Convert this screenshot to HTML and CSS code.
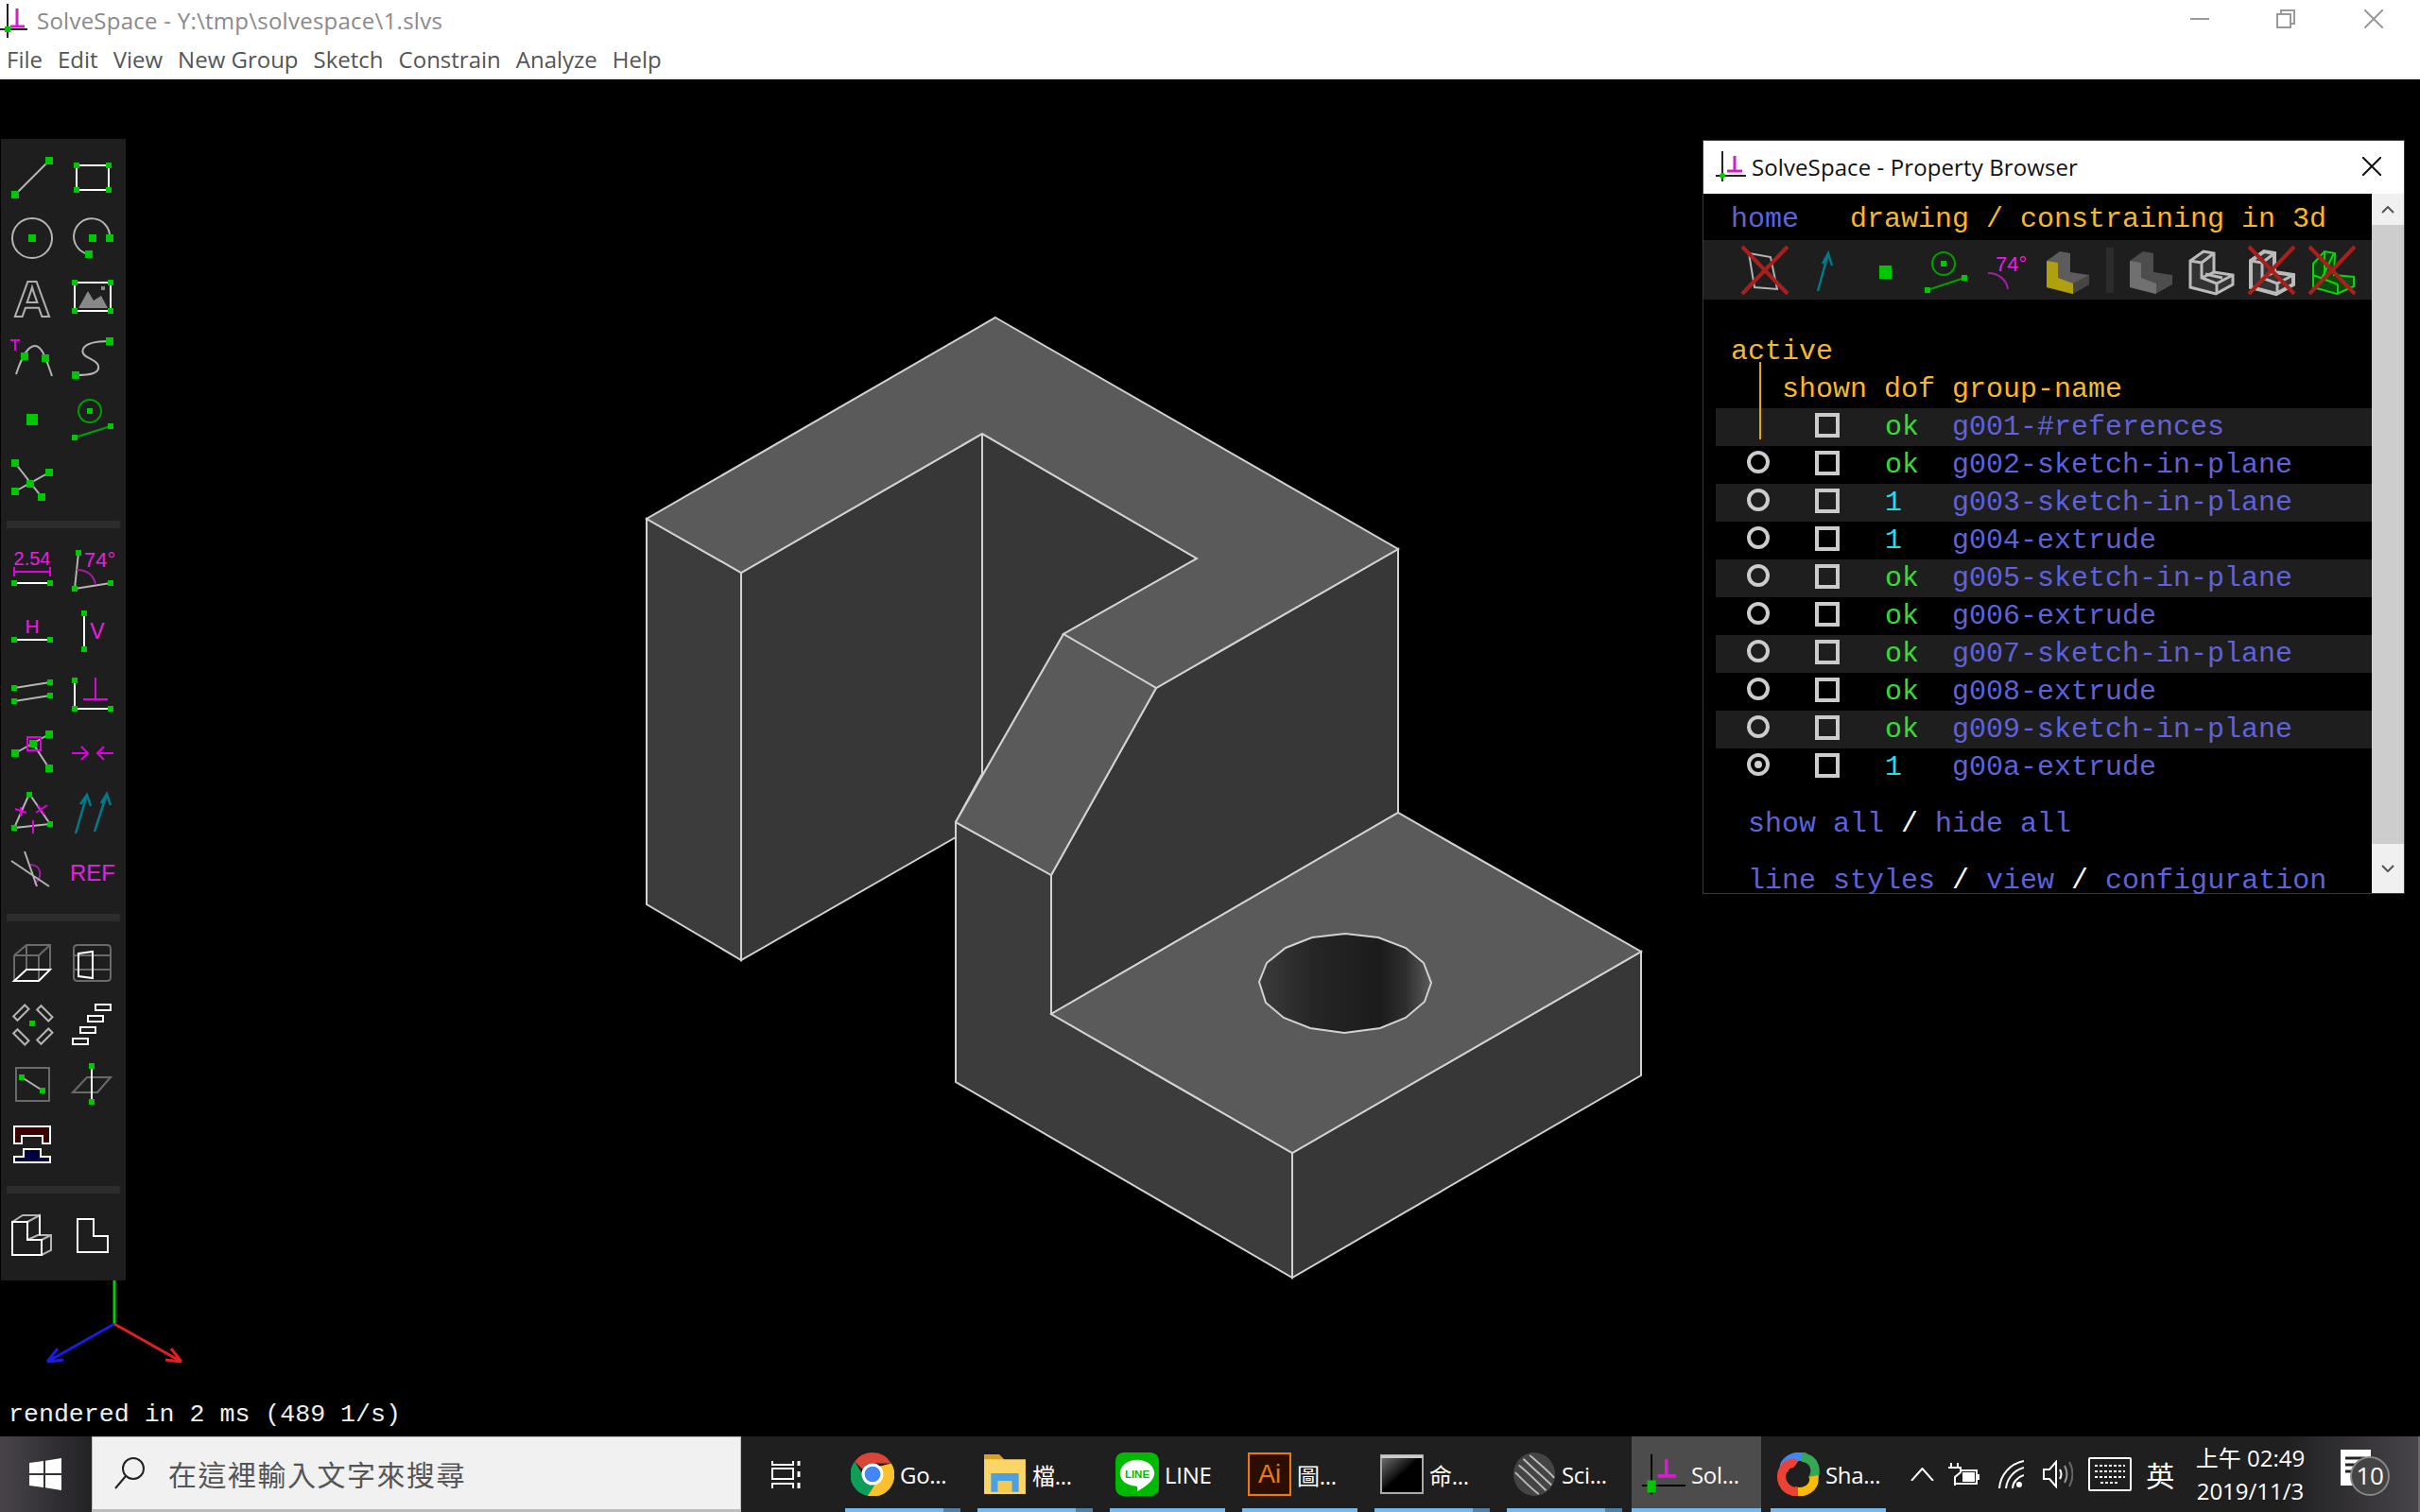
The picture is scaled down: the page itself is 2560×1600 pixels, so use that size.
FILE: index.html
```html
<!DOCTYPE html>
<html lang="zh-Hant">
<head>
  <meta charset="UTF-8" />
  <title>SolveSpace - Y:\tmp\solvespace\1.slvs</title>
  <link rel="stylesheet" href="styles.css">
</head>
<body>
  <div class="screen">
    <div class="titlebar">
      <svg class="logo" width="30" height="38" viewBox="0 0 30 38">
        <path d="M8 1V37M0 28H29" stroke="#222" stroke-width="2" fill="none"/>
        <path d="M11 25H26M18 6V25" stroke="#d020c8" stroke-width="3" fill="none"/>
        <rect x="5" y="25" width="6" height="6" fill="#00c800"/>
      </svg>
      <span class="title">SolveSpace - Y:\tmp\solvespace\1.slvs</span>
      <div class="winctl">
        <svg width="20" height="20" viewBox="0 0 20 20"><path d="M0 10H20"/></svg>
        <svg width="20" height="20" viewBox="0 0 20 20"><path d="M1 5H15V19H1ZM5 5V1H19V15H15"/></svg>
        <svg width="20" height="20" viewBox="0 0 20 20"><path d="M0 0L20 20M20 0L0 20"/></svg>
      </div>
    </div>
    <div class="menubar">
      <span>File</span><span>Edit</span><span>View</span><span>New Group</span><span>Sketch</span><span>Constrain</span><span>Analyze</span><span>Help</span>
    </div>

    <div class="canvas">
      <!-- model, coordinates are the screen ones -->
      <svg class="model" viewBox="0 84 2560 1436">
        <defs>
          <linearGradient id="holeshade" x1="0" x2="1" y1="0" y2="0">
            <stop offset="0" stop-color="#3c3c3c"/>
            <stop offset=".3" stop-color="#262626"/>
            <stop offset=".7" stop-color="#1b1b1b"/>
            <stop offset=".85" stop-color="#2e2e2e"/>
            <stop offset="1" stop-color="#5c5c5c"/>
          </linearGradient>
        </defs>
        <polygon class="f-left" points="684,549 784,606 784,1016 684,957"/>
        <polygon class="f-front" points="784,606 1039,459 1039,819 1011,870 1011,886 784,1016"/>
        <polygon class="f-front" points="1039,459 1266,591 1125,671 1011,870 1039,819"/>
        <polygon class="f-front" points="1223,728 1479,581 1479,860 1112,1073 1112,926"/>
        <polygon class="f-left" points="1011,870 1112,926 1112,1073 1367,1220 1367,1352 1011,1145"/>
        <polygon class="f-front" points="1367,1220 1736,1007 1736,1138 1367,1352"/>
        <polygon class="f-top" points="1053,336 1479,581 1223,728 1125,671 1266,591 1039,459 784,606 684,549"/>
        <polygon class="f-top" points="1125,671 1223,728 1112,926 1011,870"/>
        <polygon class="f-top" points="1112,1073 1479,860 1736,1007 1367,1220"/>
        <polygon class="hole" points="1423,988 1458,992 1487,1003 1506,1019 1514,1040 1507,1060 1487,1077 1460,1088 1422,1093 1386,1088 1358,1077 1339,1061 1332,1039 1340,1019 1360,1003 1388,992"/>
      </svg>

      <svg class="axes" width="160" height="110" viewBox="40 1340 160 110">
        <path d="M121 1401V1355" stroke="#00d000"/>
        <path d="M121 1401L50 1441M50 1441L61 1427M50 1441L67 1439" stroke="#1c1ce0"/>
        <path d="M121 1401L192 1441M192 1441L181 1427M192 1441L175 1439" stroke="#e02020"/>
      </svg>

      <div class="toolbar">
        <div class="tool-row">
          <svg class="ic" viewBox="0 0 48 48"><path class="gr" d="M6 43L42 7"/><rect class="pt" x="2" y="39" width="8" height="8"/><rect class="pt" x="38" y="3" width="8" height="8"/></svg>
          <svg class="ic" viewBox="0 0 48 48"><rect x="7" y="12" width="34" height="26"/><rect class="pt" x="4" y="9" width="6" height="6"/><rect class="pt" x="38" y="9" width="6" height="6"/><rect class="pt" x="4" y="35" width="6" height="6"/><rect class="pt" x="38" y="35" width="6" height="6"/></svg>
        </div>
        <div class="tool-row">
          <svg class="ic" viewBox="0 0 48 48"><circle class="gr" cx="24" cy="25" r="21"/><rect class="pt" x="20" y="21" width="8" height="8"/></svg>
          <svg class="ic" viewBox="0 0 48 48"><path class="gr" d="M20 42A19 19 0 1 1 42 25"/><rect class="pt" x="20" y="21" width="8" height="8"/><rect class="pt" x="38" y="21" width="8" height="8"/><rect class="pt" x="16" y="38" width="8" height="8"/></svg>
        </div>
        <div class="tool-row">
          <svg class="ic" viewBox="0 0 48 48"><text class="glyph-a" x="24" y="44" text-anchor="middle">A</text></svg>
          <svg class="ic" viewBox="0 0 48 48"><rect x="5" y="8" width="38" height="30"/><path d="M9 35L19 17L25 27L33 22L40 35Z" fill="#888" stroke="none"/><rect x="33" y="12" width="4" height="4" fill="#888" stroke="none"/><rect class="pt" x="2" y="5" width="6" height="6"/><rect class="pt" x="40" y="5" width="6" height="6"/><rect class="pt" x="2" y="35" width="6" height="6"/><rect class="pt" x="40" y="35" width="6" height="6"/></svg>
        </div>
        <div class="tool-row">
          <svg class="ic" viewBox="0 0 48 48"><path class="gr" d="M7 41C14 20 20 11 27 11S38 22 45 43"/><path class="mg" d="M1 5H11M6 5V16"/><rect class="pt" x="12" y="18" width="8" height="8"/><rect class="pt" x="34" y="20" width="8" height="8"/></svg>
          <svg class="ic" viewBox="0 0 48 48"><path class="gr" d="M6 42C22 42 32 40 30 32C28 24 10 24 14 14C17 8 30 6 42 6"/><rect class="pt" x="2" y="38" width="8" height="8"/><rect class="pt" x="38" y="2" width="8" height="8"/></svg>
        </div>
        <div class="tool-row">
          <svg class="ic" viewBox="0 0 48 48"><rect class="pt" x="18" y="19" width="12" height="12"/></svg>
          <svg class="ic" viewBox="0 0 48 48"><circle cx="21" cy="16" r="12" stroke="#00a000"/><path d="M5 44L43 32" stroke="#00a000"/><rect class="pt" x="18" y="13" width="6" height="6"/><rect class="pt" x="2" y="41" width="6" height="6"/><rect class="pt" x="40" y="29" width="6" height="6"/></svg>
        </div>
        <div class="tool-row">
          <svg class="ic" viewBox="0 0 48 48"><path class="gr" d="M6 7L34 43M6 37L42 17"/><rect class="pt" x="2" y="3" width="8" height="8"/><rect class="pt" x="38" y="13" width="8" height="8"/><rect class="pt" x="2" y="33" width="8" height="8"/><rect class="pt" x="30" y="39" width="8" height="8"/><rect class="pt" x="18" y="25" width="8" height="8"/></svg>
          <span class="ic"></span>
        </div>

        <div class="tool-sep"></div>

        <div class="tool-row">
          <svg class="ic" viewBox="0 0 48 48"><text class="mg-t" x="24" y="19" font-size="20" text-anchor="middle">2.54</text><path class="mg" d="M5 21V31M43 21V31M5 26H43"/><path d="M5 38H43"/><rect class="pt" x="2" y="35" width="6" height="6"/><rect class="pt" x="40" y="35" width="6" height="6"/></svg>
          <svg class="ic" viewBox="0 0 48 48"><text class="mg-t" x="15" y="21" font-size="22">74°</text><path class="gr" d="M9 6L5 44L43 38"/><path d="M7 24C18 24 26 30 27 40" stroke="#a020a0"/><rect class="pt" x="6" y="3" width="6" height="6"/><rect class="pt" x="2" y="41" width="6" height="6"/><rect class="pt" x="40" y="35" width="6" height="6"/></svg>
        </div>
        <div class="tool-row">
          <svg class="ic" viewBox="0 0 48 48"><text class="mg-t" x="24" y="27" font-size="21" text-anchor="middle">H</text><path d="M5 34H43"/><rect class="pt" x="2" y="31" width="6" height="6"/><rect class="pt" x="40" y="31" width="6" height="6"/></svg>
          <svg class="ic" viewBox="0 0 48 48"><text class="mg-t" x="29" y="33" font-size="23" text-anchor="middle">V</text><path d="M15 6V44"/><rect class="pt" x="12" y="3" width="6" height="6"/><rect class="pt" x="12" y="41" width="6" height="6"/></svg>
        </div>
        <div class="tool-row">
          <svg class="ic" viewBox="0 0 48 48"><path class="gr" d="M5 21L43 15M5 35L43 29"/><rect class="pt" x="2" y="18" width="6" height="6"/><rect class="pt" x="40" y="12" width="6" height="6"/><rect class="pt" x="2" y="32" width="6" height="6"/><rect class="pt" x="40" y="26" width="6" height="6"/></svg>
          <svg class="ic" viewBox="0 0 48 48"><path d="M5 13V43H43"/><path class="mg" d="M14 33H40M27 10V33"/><rect class="pt" x="2" y="10" width="6" height="6"/><rect class="pt" x="2" y="40" width="6" height="6"/><rect class="pt" x="40" y="40" width="6" height="6"/></svg>
        </div>
        <div class="tool-row">
          <svg class="ic" viewBox="0 0 48 48"><path class="gr" d="M6 26L42 6M25 16L42 42"/><rect class="mg" x="19" y="9" width="14" height="14"/><rect class="pt" x="2" y="22" width="8" height="8"/><rect class="pt" x="38" y="2" width="8" height="8"/><rect class="pt" x="38" y="38" width="8" height="8"/><rect class="pt" x="21" y="12" width="8" height="8"/></svg>
          <svg class="ic" viewBox="0 0 48 48"><path class="mg" d="M2 26H19M12 19L19 26L12 33M46 26H29M36 19L29 26L36 33"/></svg>
        </div>
        <div class="tool-row">
          <svg class="ic" viewBox="0 0 48 48"><path class="gr" d="M21 5L5 41L43 37Z"/><path class="mg" d="M6 21L18 25M12 19V29M28 25L40 17M30 17L37 27M25 33V47"/><rect class="pt" x="18" y="3" width="6" height="6"/><rect class="pt" x="2" y="38" width="6" height="6"/><rect class="pt" x="40" y="34" width="6" height="6"/></svg>
          <svg class="ic" viewBox="0 0 48 48"><path class="tl" d="M6 47L18 6M11 16L18 6L22 18M26 45L39 5M33 15L39 5L43 17"/></svg>
        </div>
        <div class="tool-row">
          <svg class="ic" viewBox="0 0 48 48"><path d="M22 16C34 16 36 30 26 36" stroke="#a020a0"/><path class="gr" d="M2 12L42 39M16 2L29 39"/></svg>
          <svg class="ic" viewBox="0 0 48 48"><text class="mg-t" x="24" y="33" font-size="24" text-anchor="middle">REF</text></svg>
        </div>

        <div class="tool-sep"></div>

        <div class="tool-row">
          <svg class="ic" viewBox="0 0 48 48"><path class="dim" d="M5 16H31V43M5 16L18 5H43V31M31 16L43 5M5 16V43M18 5V31"/><path d="M5 43H31L43 31H18Z"/></svg>
          <svg class="ic" viewBox="0 0 48 48"><path class="dim" d="M8 5H39Q43 5 43 9V39Q43 43 39 43H8Q4 43 4 39V9Q4 5 8 5ZM4 16H43M4 31H43"/><path d="M9 14L24 12V40L9 38Z"/></svg>
        </div>
        <div class="tool-row">
          <svg class="ic" viewBox="0 0 48 48"><g class="gr"><rect x="4" y="10" width="17" height="6" transform="rotate(-45 12 13)"/><rect x="29" y="10" width="17" height="6" transform="rotate(45 37 13)"/><rect x="4" y="35" width="17" height="6" transform="rotate(45 12 38)"/><rect x="29" y="35" width="17" height="6" transform="rotate(-45 37 38)"/></g><rect class="pt" x="21" y="21" width="6" height="6"/></svg>
          <svg class="ic" viewBox="0 0 48 48"><rect x="27" y="4" width="16" height="6"/><rect x="19" y="16" width="16" height="6"/><rect x="11" y="28" width="16" height="6"/><rect x="3" y="40" width="16" height="6"/></svg>
        </div>
        <div class="tool-row">
          <svg class="ic" viewBox="0 0 48 48"><rect class="dim" x="7" y="7" width="35" height="35"/><path class="gr" d="M13 17L35 31"/><rect class="pt" x="10" y="14" width="6" height="6"/><rect class="pt" x="32" y="28" width="6" height="6"/></svg>
          <svg class="ic" viewBox="0 0 48 48"><path class="dim" d="M3 33L18 17H43L29 33Z"/><path d="M23 5V43"/><rect class="pt" x="20" y="2" width="6" height="6"/><rect class="pt" x="20" y="40" width="6" height="6"/></svg>
        </div>
        <div class="tool-row">
          <svg class="ic" viewBox="0 0 48 48"><path d="M5 5H43V23H35V15H13V23H5Z" fill="#3a0000"/><path d="M5 43H43V37H33V29H15V37H5Z" fill="#000040"/></svg>
          <span class="ic"></span>
        </div>

        <div class="tool-sep"></div>

        <div class="tool-row">
          <svg class="ic" viewBox="0 0 48 48"><path class="gr" d="M3 10L14 3H32M19 10L32 3V24M19 29L30 24H44V40L34 45M34 29L44 24"/><path d="M3 10H19V29H34V45H3Z"/><path d="M32 3V24"/></svg>
          <svg class="ic" viewBox="0 0 48 48"><path d="M8 7H25V25H40V42H8Z"/></svg>
        </div>
      </div>

      <div class="pb-window">
        <div class="pb-title">
          <svg width="34" height="34" viewBox="0 0 34 34">
            <path d="M7 1V33M0 27H32" stroke="#222" stroke-width="2" fill="none"/>
            <path d="M12 22H28M20 6V22" stroke="#d020c8" stroke-width="3" fill="none"/>
            <circle cx="7" cy="27" r="3" fill="#00c800"/>
          </svg>
          <span>SolveSpace - Property Browser</span>
          <svg class="pb-close" width="20" height="20" viewBox="0 0 20 20"><path d="M0 0L20 20M20 0L0 20" stroke="#111" stroke-width="2"/></svg>
        </div>
        <div class="pb-body">
          <div class="pb-text">
            <div class="tw first"><span class="lnk">home</span><span class="yel">   drawing / constraining in 3d</span></div>

            <div class="pb-icons">
              <svg class="pi" viewBox="0 0 48 50"><path class="gr" d="M7 7L30 11L37 45L13 43Z"/><use href="#redx"/></svg>
              <svg class="pi" viewBox="0 0 48 50"><path class="tl" d="M16 47L27 7M21 18L27 7L31 20"/></svg>
              <svg class="pi" viewBox="0 0 48 50"><rect class="pt" x="17" y="20" width="13" height="14"/></svg>
              <svg class="pi" viewBox="0 0 48 50"><circle cx="21" cy="18" r="12" stroke="#00a000"/><path d="M4 46L43 33" stroke="#00a000"/><rect class="pt" x="18" y="15" width="6" height="6"/><rect class="pt" x="1" y="43" width="6" height="6"/><rect class="pt" x="40" y="30" width="6" height="6"/></svg>
              <svg class="pi" viewBox="0 0 48 50"><text class="mg-t" x="12" y="26" font-size="22">74°</text><path d="M4 28C16 28 24 36 25 45" stroke="#a020a0"/></svg>
              <svg class="pi" viewBox="0 0 48 50"><path d="M2 15L16 5L27 7V27L47 30V40L29 50L2 43Z" fill="#5c5c5c" stroke="none"/><path d="M2 15L14 17V33L30 39V50L2 43Z" fill="#b0a010" stroke="none"/><path d="M27 27L47 30V40L30 50V39L47 30" fill="#454545" stroke="none"/></svg>
              <div class="pi-sep"></div>
              <svg class="pi" viewBox="0 0 48 50"><path d="M2 15L16 5L27 7V27L47 30V40L29 50L2 43Z" fill="#4d4d4d" stroke="none"/><path d="M2 15L14 17V33L30 39V50L2 43Z" fill="#707070" stroke="none"/></svg>
              <svg class="pi" viewBox="0 0 48 50"><path d="M2 15L16 5L27 7V27L47 30V40L29 50L2 43Z" stroke="#bbb" stroke-width="3" fill="#333"/><path d="M2 15L14 17V33L30 39V50M14 17L27 7M30 39L47 30M14 33L27 27M18 29L36 33" stroke="#bbb" stroke-width="3"/></svg>
              <svg class="pi" viewBox="0 0 48 50"><path d="M2 15L16 5L27 7V27L47 30V40L29 50L2 43Z" stroke="#bbb" stroke-width="4" fill="#333"/><path d="M2 15L14 17V33L30 39V50M14 17L27 7M30 39L47 30M14 33L27 27" stroke="#bbb" stroke-width="3"/><use href="#redx"/></svg>
              <svg class="pi" viewBox="0 0 48 50"><path d="M4 18L16 5L27 7L26 30L47 32V42L29 50L4 43Z M16 5V36M26 7L10 40M4 30L30 40M30 40V50" stroke="#10d010" fill="#0a4a0a"/><use href="#redx"/></svg>
            </div>

            <div class="tw active-label yel">active</div>
            <div class="tw yel">   shown dof group-name</div>

            <div class="active-bar"></div>

            <div class="gr-row"><span></span><span class="chk"></span><span class="ok">ok</span><span class="lnk">g001-#references</span></div>
            <div class="gr-row"><span class="rad"></span><span class="chk"></span><span class="ok">ok</span><span class="lnk">g002-sketch-in-plane</span></div>
            <div class="gr-row"><span class="rad"></span><span class="chk"></span><span class="one">1</span><span class="lnk">g003-sketch-in-plane</span></div>
            <div class="gr-row"><span class="rad"></span><span class="chk"></span><span class="one">1</span><span class="lnk">g004-extrude</span></div>
            <div class="gr-row"><span class="rad"></span><span class="chk"></span><span class="ok">ok</span><span class="lnk">g005-sketch-in-plane</span></div>
            <div class="gr-row"><span class="rad"></span><span class="chk"></span><span class="ok">ok</span><span class="lnk">g006-extrude</span></div>
            <div class="gr-row"><span class="rad"></span><span class="chk"></span><span class="ok">ok</span><span class="lnk">g007-sketch-in-plane</span></div>
            <div class="gr-row"><span class="rad"></span><span class="chk"></span><span class="ok">ok</span><span class="lnk">g008-extrude</span></div>
            <div class="gr-row"><span class="rad"></span><span class="chk"></span><span class="ok">ok</span><span class="lnk">g009-sketch-in-plane</span></div>
            <div class="gr-row"><span class="rad on"></span><span class="chk"></span><span class="one">1</span><span class="lnk">g00a-extrude</span></div>

            <div class="tw show-line"> <span class="lnk">show all</span> / <span class="lnk">hide all</span></div>
            <div class="tw links-line"> <span class="lnk">line styles</span> / <span class="lnk">view</span> / <span class="lnk">configuration</span></div>
          </div>
          <div class="pb-scroll">
            <div class="sc-btn"><svg width="14" height="8" viewBox="0 0 14 8"><path d="M1 7L7 1L13 7"/></svg></div>
            <div class="sc-thumb"></div>
            <div class="sc-btn"><svg width="14" height="8" viewBox="0 0 14 8"><path d="M1 1L7 7L13 1"/></svg></div>
          </div>
        </div>
      </div>

      <div class="status">rendered in 2 ms (489 1/s)</div>
    </div>

    <div class="taskbar">
      <div class="start">
        <svg width="34" height="34" viewBox="0 0 34 34"><path d="M0 5L15 3V16H0ZM17 2.700L34 0V16H17ZM0 18H15V31L0 29ZM17 18H34V34L17 31.300Z" fill="#fff"/></svg>
      </div>
      <div class="search">
        <svg width="34" height="36" viewBox="0 0 34 36"><circle cx="20" cy="13" r="11" fill="none" stroke="#222" stroke-width="2"/><path d="M12 21L1 34" stroke="#222" stroke-width="2"/></svg>
        <span>在這裡輸入文字來搜尋</span>
      </div>
      <div class="taskview">
        <svg width="32" height="30" viewBox="0 0 32 30" fill="none" stroke="#fff" stroke-width="2"><path d="M1 1V5H23V1M1 9H23V20H1ZM1 30V25H23V30"/><path d="M29 1V6M29 24V30M29 12V18" stroke-width="3"/></svg>
      </div>

      <div class="apps">
        <div class="app stack">
          <svg class="app-ic" viewBox="0 0 44 44">
            <path d="M22 0A22 22 0 0 1 41 11H22A11 11 0 0 0 12 17L4 9A22 22 0 0 1 22 0Z" fill="#db4437"/>
            <path d="M4 9L13 24A11 11 0 0 0 25 33L17 44A22 22 0 0 1 4 9Z" fill="#0f9d58"/>
            <path d="M41 11A22 22 0 0 1 17 44L28 27A11 11 0 0 0 29 14Z" fill="#fbc02d"/>
            <circle cx="22" cy="22" r="11" fill="#fff"/><circle cx="22" cy="22" r="8" fill="#4285f4"/>
          </svg>
          <span>Go...</span>
        </div>
        <div class="app stack">
          <svg class="app-ic" viewBox="0 0 44 44">
            <path d="M1 2H16L21 7H43V42H1Z" fill="#fbd568"/><path d="M1 2H16L21 7H1Z" fill="#d9a21b"/>
            <path d="M8 40V21H36V40H29V29H15V40Z" fill="#4aa0e0"/><rect x="15" y="29" width="14" height="11" fill="#f4c94f"/>
          </svg>
          <span>檔...</span>
        </div>
        <div class="app">
          <svg class="app-ic" viewBox="0 0 48 48">
            <rect width="48" height="48" rx="9" fill="#00b900"/>
            <path d="M24 8C35 8 43 15 43 23C43 31 33 38 24 43C25 38 24 37 21 37C12 36 5 31 5 23C5 15 13 8 24 8Z" fill="#fff"/>
            <text class="line-t" x="24" y="28" text-anchor="middle">LINE</text>
          </svg>
          <span>LINE</span>
        </div>
        <div class="app">
          <svg class="app-ic" viewBox="0 0 44 44">
            <rect x="1" y="1" width="42" height="42" fill="#2b0e00" stroke="#ea7a10" stroke-width="2"/>
            <text class="ai-t" x="22" y="31" text-anchor="middle">Ai</text>
          </svg>
          <span>圖...</span>
        </div>
        <div class="app stack">
          <svg class="app-ic" viewBox="0 0 46 44">
            <defs><linearGradient id="cmdsh" x1="0" y1="0" x2="1" y2="1"><stop offset="0" stop-color="#777"/><stop offset=".45" stop-color="#111"/><stop offset=".5" stop-color="#000"/></linearGradient></defs>
            <rect x="1" y="2" width="44" height="40" fill="url(#cmdsh)" stroke="#aaa" stroke-width="2"/>
            <rect x="1" y="2" width="44" height="3" fill="#ccc"/>
          </svg>
          <span>命...</span>
        </div>
        <div class="app stack">
          <svg class="app-ic" viewBox="0 0 46 48">
            <ellipse cx="23" cy="24" rx="23" ry="24" fill="#444"/>
            <path d="M6 14C16 22 30 36 36 42M11 7C20 16 36 30 42 36M18 3C26 10 40 22 45 28M2 22C10 30 20 40 28 46" fill="none" stroke="#bbb" stroke-width="2"/>
          </svg>
          <span>Sci...</span>
        </div>
        <div class="app active">
          <svg class="app-ic" viewBox="0 0 50 46">
            <path d="M11 0V46M0 36H50" stroke="#000" stroke-width="2" fill="none"/>
            <path d="M18 25H39M28 6V25" stroke="#d020c8" stroke-width="4" fill="none"/>
            <rect x="6" y="30" width="10" height="14" fill="#00c800"/>
          </svg>
          <span>Sol...</span>
        </div>
        <div class="app">
          <svg class="app-ic" viewBox="0 0 44 44" fill="none" stroke-width="9">
            <path d="M8 20C6 8 18 2 30 5" stroke="#4285f4"/>
            <path d="M26 5C40 6 42 20 36 28" stroke="#34a853"/>
            <path d="M38 24C40 36 28 42 18 39" stroke="#fbbc05"/>
            <path d="M22 40C6 40 2 24 8 16C14 8 20 12 20 12" stroke="#ea4335"/>
            <ellipse cx="22" cy="22" rx="8" ry="11" transform="rotate(35 22 22)" fill="#1f1f20" stroke="none"/>
          </svg>
          <span>Sha...</span>
        </div>
      </div>

      <div class="tray">
        <svg class="tray-up" width="25" height="14" viewBox="0 0 25 14" fill="none" stroke="#fff" stroke-width="2"><path d="M1 14L12.500 1L24 14"/></svg>
        <svg width="33" height="24" viewBox="0 0 33 24" fill="none" stroke="#fff" stroke-width="2"><path d="M3 0V5M10 0V5M0 5H13V10L7 15V24M13 8H30V22H8"/><rect x="15" y="10" width="13" height="10" fill="#fff" stroke="none"/><rect x="31" y="12" width="2" height="6" fill="#fff" stroke="none"/></svg>
        <svg width="27" height="30" viewBox="0 0 27 30" fill="none" stroke="#fff" stroke-width="2"><path d="M1 30C2 16 12 4 27 1M8 30C9 20 16 11 27 8M15 30C15 24 20 18 27 16" /><circle cx="22" cy="26" r="3" fill="#fff" stroke="none"/></svg>
        <svg width="32" height="30" viewBox="0 0 32 30" fill="none" stroke="#fff" stroke-width="2"><path d="M1 10H7L14 2V28L7 20H1Z"/><path d="M18 10Q21 15 18 20"/><path d="M23 6Q28 15 23 24" stroke="#999"/><path d="M28 2Q35 15 28 28" stroke="#666"/></svg>
        <svg class="tray-kb" width="46" height="36" viewBox="0 0 46 36" fill="none" stroke="#fff" stroke-width="2"><rect x="1" y="1" width="44" height="34" rx="1"/><path d="M7 9H39M7 15H39M7 21H39M13 27H33" stroke-dasharray="3 2"/></svg>
        <span class="ime">英</span>
        <div class="clock"><div>上午 02:49</div><div>2019/11/3</div></div>
        <div class="notify">
          <svg width="32" height="38" viewBox="0 0 32 38"><path d="M0 0H32V26L20 38H0Z" fill="#fff"/><path d="M5 9H26M5 16H26M5 23H18" stroke="#222" stroke-width="3"/></svg>
          <span class="badge">10</span>
        </div>
      </div>
    </div>
  </div>

  <svg class="defs-only" width="0" height="0">
    <defs>
      <g id="redx"><path d="M0 0L48 50M48 0L0 50" stroke="#a8201c" stroke-width="4" fill="none"/></g>
    </defs>
  </svg>
</body>
</html>
```

FILE: styles.css
```css
* {
  box-sizing: border-box;
}
html, body {
  margin: 0;
  padding: 0;
  background-color: #000;
}
body {
  font-family: "Open Sans", "Noto Sans CJK TC", sans-serif;
}
.screen {
  display: flex;
  flex-direction: column;
  width: 2560px;
  height: 1600px;
  overflow: hidden;
}

/* main window top */
.titlebar {
  display: flex;
  align-items: center;
  height: 42px;
  flex: none;
  padding-left: 0;
  background-color: #fff;
}
.logo {
  margin: 2px 9px 0 0;
  flex: none;
}
.title {
  font-size: 24px;
  letter-spacing: 0.25px;
  color: #8a8a8a;
  white-space: nowrap;
}
.winctl {
  display: flex;
  gap: 71px;
  margin-left: auto;
  margin-right: 39px;
  margin-top: -2px;
}
.winctl svg:nth-child(2) {
  margin-right: 2px;
}
.winctl path {
  fill: none;
  stroke: #999;
  stroke-width: 2;
}
.menubar {
  display: flex;
  align-items: center;
  gap: 16px;
  height: 42px;
  flex: none;
  padding: 0 0 0 7px;
  font-size: 24px;
  color: #555;
  background-color: #fff;
  border-bottom: 2px solid #f0f0f0;
}

.canvas {
  position: relative;
  flex: 1;
  min-height: 0;
  background-color: #000;
}
.model {
  position: absolute;
  left: 0;
  top: 0;
  width: 2560px;
  height: 1436px;
}
.model polygon {
  stroke: #d2d2d2;
  stroke-width: 2;
}
.f-top { fill: #5a5a5a; }
.f-left { fill: #3c3c3c; }
.f-front { fill: #373737; }
.hole { fill: url(#holeshade); }
.axes {
  position: absolute;
  left: 40px;
  top: 1256px;
}
.axes path {
  fill: none;
  stroke-width: 3;
}

/* left tool palette */
.toolbar {
  position: absolute;
  left: 1px;
  top: 63px;
  width: 132px;
  padding: 16px 0 24px 9px;
  background-color: #1e1e1e;
}
.tool-row {
  display: flex;
  gap: 16px;
  height: 48px;
  margin-bottom: 16px;
}
.tool-row:has(+ .tool-sep), .tool-row:last-child {
  margin-bottom: 0;
}
.tool-sep {
  width: 120px;
  height: 8px;
  margin: 20px 0 20px -3px;
  background-color: #2c2c2c;
}
.ic, .pi {
  display: block;
  width: 48px;
  height: 48px;
  flex: none;
  fill: none;
  stroke: #fff;
  stroke-width: 2;
  overflow: visible;
}
.pt { fill: #00c800; stroke: none; }
.gr { stroke: #b4b4b4; }
.dim { stroke: #6a6a6a; }
.mg { stroke: #e000e0; }
.tl { stroke: #007a8a; stroke-width: 2.5; }
.mg-t {
  font-family: "Liberation Sans", sans-serif;
  fill: #e81ee8;
  stroke: none;
}
.glyph-a {
  font-family: "Liberation Sans", sans-serif;
  font-size: 54px;
  font-weight: bold;
  fill: none;
  stroke: #b0b0b0;
  stroke-width: 2;
}

/* property browser window */
.pb-window {
  position: absolute;
  left: 1801px;
  top: 64px;
  width: 743px;
  height: 798px;
  display: flex;
  flex-direction: column;
  border: 1px solid #3a3a3a;
  background-color: #000;
}
.pb-title {
  display: flex;
  align-items: center;
  gap: 4px;
  height: 56px;
  flex: none;
  padding: 0 0 2px 13px;
  font-size: 24px;
  letter-spacing: 0.1px;
  color: #111;
  background-color: #fff;
}
.pb-close {
  margin-left: auto;
  margin-right: 24px;
}
.pb-body {
  display: flex;
  flex: 1;
  min-height: 0;
}
.pb-text {
  position: relative;
  flex: 1;
  min-width: 0;
  font-family: "Liberation Mono", monospace;
  font-size: 30px;
  line-height: 40px;
}
.tw {
  height: 40px;
  padding-left: 29px;
  color: #fff;
  white-space: pre;
}
.tw.first {
  margin-top: 7px;
}
.lnk { color: #5f62dc; }
.yel { color: #f4b92c; }
.ok { color: #35dc35; }
.one { color: #26e0e0; }
.pb-icons {
  display: flex;
  align-items: center;
  height: 63px;
  margin-top: 2px;
  padding: 0 0 0 41px;
  gap: 16px;
  background-color: #1e1e1e;
}
.pi {
  height: 50px;
}
.pi-sep {
  width: 8px;
  height: 48px;
  margin: 0 -1px 0 1px;
  background-color: #2c2c2c;
}
.active-label {
  margin-top: 35px;
}
.active-bar {
  position: absolute;
  left: 59px;
  top: 178px;
  width: 2px;
  height: 82px;
  background-color: #e8a90f;
}
.gr-row {
  display: grid;
  grid-template-columns: 24px 26px 23px 1fr;
  column-gap: 48px;
  align-items: center;
  height: 40px;
  margin-left: 13px;
  padding-left: 33px;
  white-space: nowrap;
}
.gr-row:nth-child(even) {
  background-color: #1e1e1e;
}
.rad {
  position: relative;
  width: 24px;
  height: 24px;
  margin-top: -6px;
  border: 4px solid #ccc;
  border-radius: 50%;
}
.rad.on::after {
  content: "";
  position: absolute;
  left: 4px;
  top: 4px;
  width: 8px;
  height: 8px;
  border-radius: 50%;
  background-color: #ccc;
}
.chk {
  width: 26px;
  height: 26px;
  margin-top: -4px;
  border: 4px solid #ccc;
}
.show-line {
  margin-top: 20px;
}
.links-line {
  margin-top: 20px;
  height: 35px;
}
.pb-scroll {
  display: flex;
  flex-direction: column;
  width: 34px;
  flex: none;
  background-color: #f0f0f0;
}
.sc-btn {
  display: flex;
  align-items: center;
  justify-content: center;
  height: 33px;
  flex: none;
}
.sc-btn path {
  fill: none;
  stroke: #555;
  stroke-width: 2;
}
.sc-thumb {
  height: 655px;
  background-color: #cdcdcd;
}
.sc-thumb + .sc-btn {
  margin-top: auto;
  height: 52px;
}
.status {
  position: absolute;
  left: 9px;
  top: 1393px;
  font-family: "Liberation Mono", monospace;
  font-size: 26.600px;
  line-height: 40px;
  color: #eee;
  white-space: pre;
}

/* windows taskbar */
.taskbar {
  display: flex;
  align-items: stretch;
  height: 80px;
  flex: none;
  font-size: 24px;
  letter-spacing: -0.3px;
  color: #fff;
  background-color: #1f1f20;
}
.start {
  display: flex;
  align-items: center;
  justify-content: center;
  width: 97px;
  padding-right: 2px;
  flex: none;
  background: linear-gradient(to right, #48444a, #222124);
}
.search {
  display: flex;
  align-items: center;
  gap: 23px;
  width: 687px;
  padding-left: 23px;
  flex: none;
  font-size: 30px;
  letter-spacing: 1.500px;
  color: #555;
  background-color: #f1f1f1;
  border: 1px solid #bbb;
  border-width: 1px 1px 3px 1px;
}
.taskview {
  display: flex;
  align-items: center;
  margin-left: 32px;
  flex: none;
}
.apps {
  display: flex;
  gap: 18px;
  margin-left: 46px;
}
.app {
  position: relative;
  display: flex;
  align-items: center;
  gap: 6px;
  width: 122px;
  padding-left: 6px;
  white-space: nowrap;
}
.app::after {
  content: "";
  position: absolute;
  left: 0;
  right: 0;
  bottom: 0;
  height: 4px;
  background-color: #76b9ed;
}
.stack::after {
  background: linear-gradient(to right, #76b9ed 85%, #4f80a8 85%);
}
.app.active {
  width: 137px;
  margin: 0 -8px;
  padding-left: 11px;
  background-color: #4c4c4c;
}
.app-ic {
  width: 46px;
  height: 46px;
  flex: none;
}
.line-t {
  font-family: "Liberation Sans", sans-serif;
  font-size: 12px;
  font-weight: bold;
  letter-spacing: 0;
  fill: #00b900;
}
.ai-t {
  font-family: "Liberation Sans", sans-serif;
  font-size: 26px;
  letter-spacing: 0;
  fill: #ea7a10;
}
.tray {
  display: flex;
  align-items: center;
  gap: 20px;
  margin-left: auto;
  padding-right: 28px;
  background: linear-gradient(to right, #1f1f20 75%, #48444a);
  border-right: 2px solid #6a6a6a;
  padding-left: 24px;
}
.tray-up {
  margin-right: -5px;
}
.tray-kb {
  margin-left: -4px;
}
.ime {
  font-size: 30px;
  margin-left: -5px;
}
.clock {
  width: 117px;
  margin-left: 2px;
  font-size: 24px;
  letter-spacing: 0;
  line-height: 35px;
  text-align: center;
  white-space: nowrap;
}
.notify {
  position: relative;
  width: 54px;
  height: 60px;
  margin-left: 17px;
}
.notify svg {
  position: absolute;
  left: 0;
  top: 4px;
}
.badge {
  position: absolute;
  left: 10px;
  top: 11px;
  width: 42px;
  height: 42px;
  border: 2px solid #888;
  border-radius: 50%;
  font-size: 26px;
  line-height: 36px;
  text-align: center;
  background-color: #444;
}
.defs-only {
  position: absolute;
}
```
